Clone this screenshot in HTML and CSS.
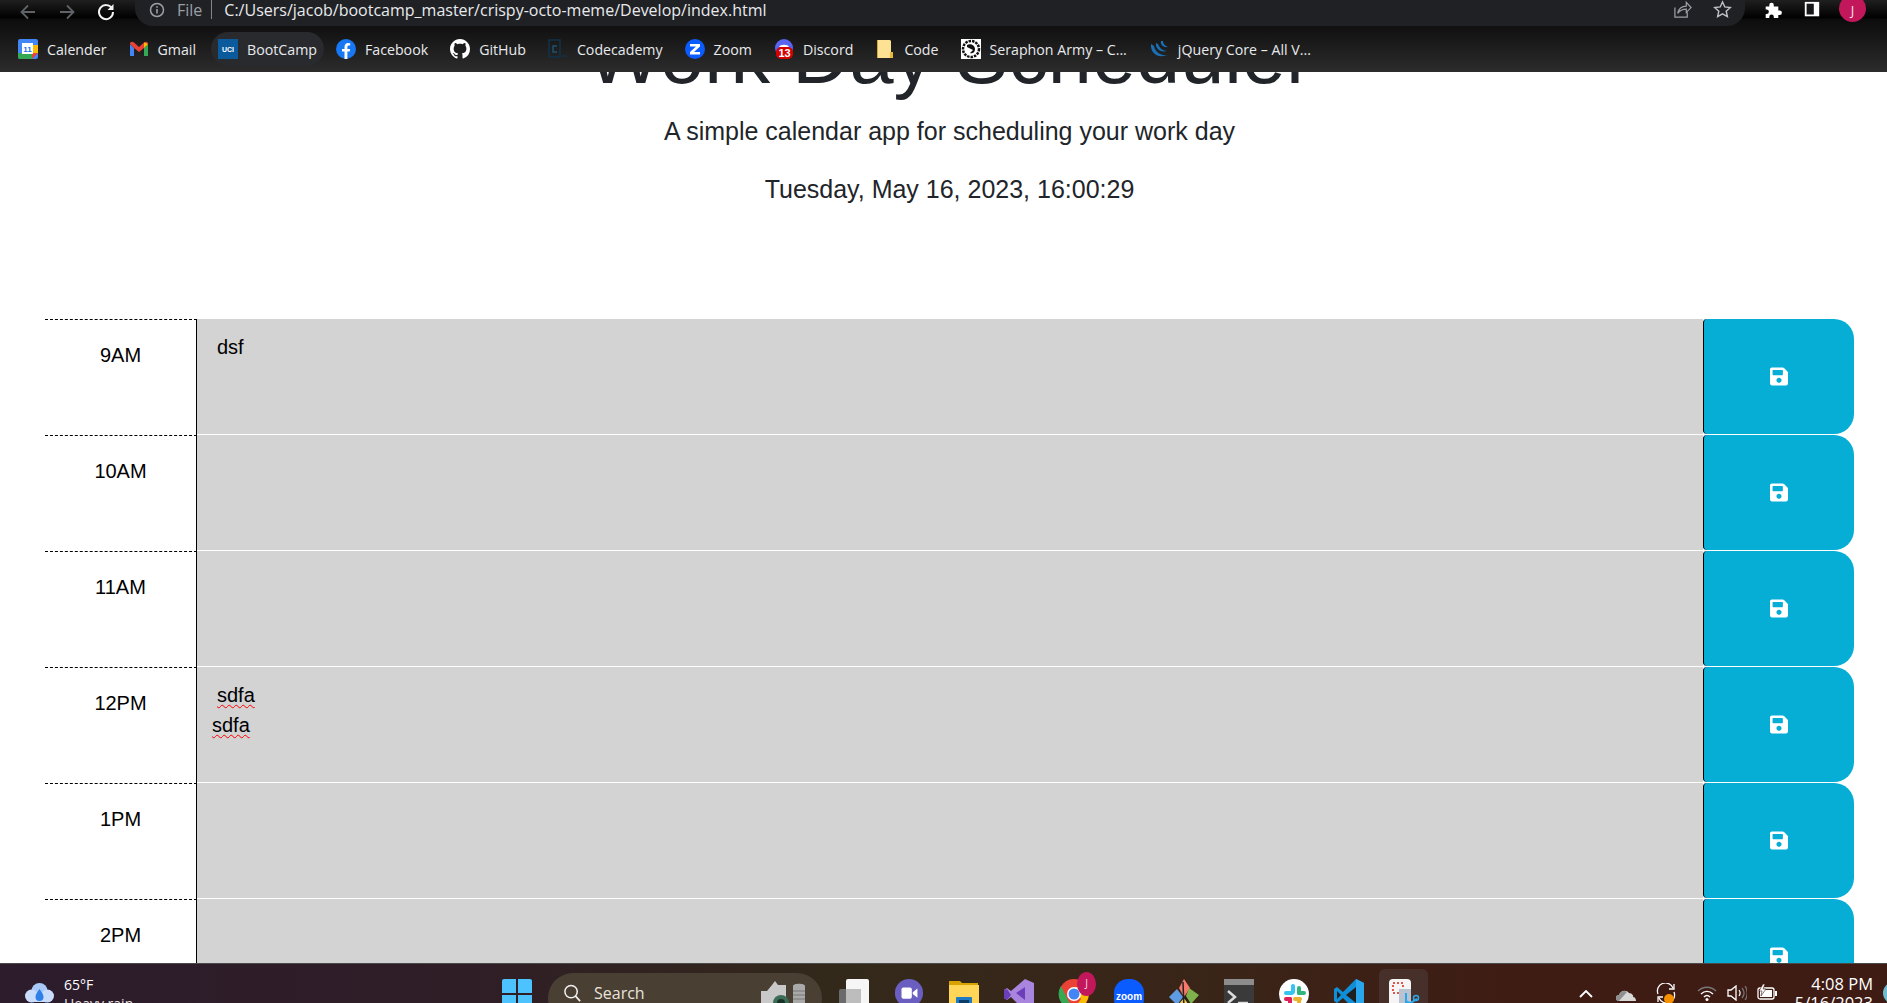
FILE: index.html
```html
<!DOCTYPE html>
<html lang="en">
<head>
<meta charset="utf-8">
<title>Work Day Scheduler</title>
<link rel="stylesheet" href="styles.css">
</head>
<body>
<div class="screen">
  <header class="chrome">
    <div class="toolbar">
      <div class="nav">
        <svg class="nav-icon" viewBox="0 0 20 20"><path d="M17 10H4M10 3.500 3.500 10 10 16.500" fill="none" stroke="#5f6368" stroke-width="1.800"/></svg>
        <svg class="nav-icon" viewBox="0 0 20 20"><path d="M3 10h13M10 3.500 16.500 10 10 16.500" fill="none" stroke="#5f6368" stroke-width="1.800"/></svg>
        <svg class="nav-icon" viewBox="0 0 20 20"><path d="M16 6.500A7 7 0 1 0 17 10" fill="none" stroke="#f1f3f4" stroke-width="2"/><path d="M17.500 2v6h-6z" fill="#f1f3f4"/></svg>
      </div>
      <div class="omnibox">
        <svg class="info" viewBox="0 0 16 16"><circle cx="8" cy="8" r="6.500" fill="none" stroke="#9aa0a6" stroke-width="1.500"/><path d="M8 7v4.500M8 4.300v1.500" stroke="#9aa0a6" stroke-width="1.600"/></svg>
        <span class="scheme">File</span>
        <span class="sep"></span>
        <span class="url">C:/Users/jacob/bootcamp_master/crispy-octo-meme/Develop/index.html</span>
        <svg class="omni-icon share" viewBox="0 0 20 20"><path d="M2 8v10h13v-5M5 14c1-5 4-7.500 9-7.500V2.500l5 5.500-5 5V9.500c-4 0-7 1.500-9 4.500z" fill="none" stroke="#9aa0a6" stroke-width="1.300"/></svg>
        <svg class="omni-icon" viewBox="0 0 20 20"><path d="m10 2 2.400 5.300 5.800.6-4.300 3.900 1.200 5.700L10 14.600l-5.100 2.900 1.200-5.700L1.800 7.900l5.800-.6z" fill="none" stroke="#bdc1c6" stroke-width="1.500"/></svg>
      </div>
      <div class="actions">
        <svg class="action" viewBox="0 0 20 20"><path d="M3 6h4V4.500a2.500 2.500 0 0 1 5 0V6h5v4.500h1.500a2.500 2.500 0 0 1 0 5H17V19h-5v-1.500a2.500 2.500 0 0 0-5 0V19H3v-4.500h1a2.500 2.500 0 0 0 0-5H3z" fill="#fff"/></svg>
        <svg class="action" viewBox="0 0 20 20"><path d="M2 1h16v16H2z" fill="#fff"/><path d="M4 3h8v12H4z" fill="#16171a"/></svg>
        <span class="avatar">J</span>
      </div>
    </div>
    <nav class="bookmarks">
      <a class="bm bm-cal"><svg viewBox="0 0 20 20"><rect width="20" height="20" rx="2" fill="#4285f4"/><path d="M0 14h14v6H2a2 2 0 0 1-2-2z" fill="#34a853"/><path d="M14 14h6v-8h-6z" fill="#fbbc04"/><path d="M14 14h6l-6 6z" fill="#ea4335"/><rect x="4" y="4" width="11" height="11" fill="#fff"/><text x="9.500" y="13" class="cal-num">11</text></svg>Calender</a>
      <a class="bm bm-gmail"><svg viewBox="0 0 20 20"><path d="M1 5v12h4V9z" fill="#4285f4"/><path d="M15 9v8h4V5z" fill="#34a853"/><path d="M1 5l4 4 5 4 5-4 4-4c0-2-2-3-4-1.500L10 8 5 3.500C3 2 1 3 1 5z" fill="#ea4335"/><path d="M15 3.500 19 5v0l-4 4z" fill="#fbbc04"/></svg>Gmail</a>
      <a class="bm bm-uci"><svg viewBox="0 0 20 20"><rect width="20" height="20" fill="#0a5a9c"/><text x="10" y="13" class="uci">UCI</text></svg>BootCamp</a>
      <a class="bm bm-fb"><svg viewBox="0 0 20 20"><circle cx="10" cy="10" r="10" fill="#1877f2"/><path d="M8.500 20v-7.500H6V10h2.500V7.800c0-2.500 1.500-3.800 3.700-3.800l2 .2v2.300h-1.200c-1.200 0-1.600.7-1.600 1.500V10h2.700l-.4 2.500H11.400V20z" fill="#fff"/></svg>Facebook</a>
      <a class="bm bm-gh"><svg viewBox="0 0 16 16"><path fill="#fff" d="M8 0C3.580 0 0 3.580 0 8c0 3.540 2.290 6.530 5.470 7.590.4.070.55-.17.55-.38 0-.19-.01-.82-.01-1.490-2.010.37-2.530-.49-2.690-.94-.09-.23-.48-.94-.82-1.130-.28-.15-.68-.52-.01-.53.63-.01 1.080.58 1.230.82.720 1.210 1.870.87 2.330.66.070-.52.280-.87.510-1.070-1.780-.2-3.640-.89-3.640-3.950 0-.87.310-1.590.820-2.150-.08-.2-.36-1.020.08-2.120 0 0 .67-.21 2.200.82.640-.18 1.320-.27 2-.27s1.360.09 2 .27c1.530-1.040 2.200-.82 2.200-.82.440 1.100.160 1.920.080 2.120.510.560.820 1.270.820 2.150 0 3.070-1.870 3.750-3.650 3.950.290.250.540.730.540 1.480 0 1.070-.01 1.930-.01 2.200 0 .210.150.460.550.380A8.010 8.010 0 0 0 16 8c0-4.420-3.580-8-8-8z"/></svg>GitHub</a>
      <a class="bm bm-cc"><svg viewBox="0 0 20 20"><path d="M1 1h11v17H1zM14 17h5" fill="none" stroke="#10324a" stroke-width="1.500"/><path d="M9 7H5v6h4" fill="none" stroke="#1d5170" stroke-width="1.500"/></svg>Codecademy</a>
      <a class="bm bm-zoom"><svg viewBox="0 0 20 20"><circle cx="10" cy="10" r="10" fill="#0b5cff"/><path d="M5 5h10v2.500L9 13h6v2.500H5V13l6-5.500H5z" fill="#fff"/></svg>Zoom</a>
      <a class="bm bm-disc"><svg viewBox="0 0 20 20"><circle cx="10" cy="9" r="9" fill="#5865f2"/><path d="M5 8c1-3 9-3 10 0z" fill="#fff"/><rect x="2" y="8" width="17" height="12" rx="5" fill="#d50000"/><text x="10.500" y="18" class="disc-num">13</text></svg>Discord</a>
      <a class="bm bm-code"><svg viewBox="0 0 20 20"><path d="M2 1h13l1 1v17H2z" fill="#fde293"/><path d="M15 13h3v6h-3z" fill="#e8b93c"/><path d="M2 1h1v18H2z" fill="#d9a92e"/></svg>Code</a>
      <a class="bm bm-sera"><svg viewBox="0 0 20 20"><rect width="20" height="20" fill="#fff"/><circle cx="10" cy="10" r="8" fill="none" stroke="#111" stroke-width="2.500" stroke-dasharray="2.500 1"/><path d="M6 6c3-2 8 0 8 4s-3 5-5 4l3-3-6-3z" fill="#111"/></svg>Seraphon Army – C...</a>
      <a class="bm bm-jq"><svg viewBox="0 0 20 20"><path d="M2 5c-1 8 6 15 16 11-6 1-12-3-13-9zM7 4c-1 5 4 10 11 8-5 0-8-4-9-7zM12 2c-1 3 2 7 7 6-3-1-5-3-5-6z" fill="#1b6fb5"/></svg>jQuery Core – All V...</a>
    </nav>
  </header>

  <main class="viewport">
    <div class="container">
      <section class="hero">
        <h1 class="title">Work Day Scheduler</h1>
        <p class="lead">A simple calendar app for scheduling your work day</p>
        <p class="lead date">Tuesday, May 16, 2023, 16:00:29</p>
      </section>
      <section class="rows">
        <div class="row">
          <div class="hour">9AM</div>
          <div class="note"><div class="line line-in">dsf</div></div>
          <button class="save"><svg class="disk" viewBox="0 0 448 512"><use href="#save"/></svg></button>
        </div>
        <div class="row">
          <div class="hour">10AM</div>
          <div class="note"></div>
          <button class="save"><svg class="disk" viewBox="0 0 448 512"><use href="#save"/></svg></button>
        </div>
        <div class="row">
          <div class="hour">11AM</div>
          <div class="note"></div>
          <button class="save"><svg class="disk" viewBox="0 0 448 512"><use href="#save"/></svg></button>
        </div>
        <div class="row">
          <div class="hour">12PM</div>
          <div class="note"><div class="line line-in"><span class="typo">sdfa</span></div><div class="line"><span class="typo">sdfa</span></div></div>
          <button class="save"><svg class="disk" viewBox="0 0 448 512"><use href="#save"/></svg></button>
        </div>
        <div class="row">
          <div class="hour">1PM</div>
          <div class="note"></div>
          <button class="save"><svg class="disk" viewBox="0 0 448 512"><use href="#save"/></svg></button>
        </div>
        <div class="row">
          <div class="hour">2PM</div>
          <div class="note"></div>
          <button class="save"><svg class="disk" viewBox="0 0 448 512"><use href="#save"/></svg></button>
        </div>
      </section>
    </div>
  </main>

  <footer class="taskbar">
    <div class="weather">
      <svg class="wx-icon" viewBox="0 0 30 32"><circle cx="15" cy="9" r="8" fill="#a8c8f8"/><circle cx="7" cy="14" r="6.500" fill="#c9dcfb"/><circle cx="23" cy="14" r="6.500" fill="#c9dcfb"/><path d="M5 16h20v4H5z" fill="#c9dcfb"/><path d="M15 7c3 4 4 6 4 8a4 4 0 0 1-8 0c0-2 1-4 4-8zM9 20c2 3 3 5 3 7a3 3 0 0 1-6 0c0-2 1-4 3-7zM21 20c2 3 3 5 3 7a3 3 0 0 1-6 0c0-2 1-4 3-7z" fill="#2f7fe8"/></svg>
      <div class="wx-text"><div>65°F</div><div class="wx-sub">Heavy rain</div></div>
    </div>
    <div class="win-wrap">
      <svg class="tb-icon" viewBox="0 0 30 30"><path d="M0 2a2 2 0 0 1 2-2h12v14H0zM16 0h12a2 2 0 0 1 2 2v12H16zM0 16h14v14H2a2 2 0 0 1-2-2zM16 16h14v12a2 2 0 0 1-2 2H16z" fill="#4cc2ff"/></svg>
    </div>
    <div class="search">
      <svg class="search-icon" viewBox="0 0 20 20"><circle cx="8.500" cy="8.500" r="6.500" fill="none" stroke="#f0f0f0" stroke-width="1.600"/><path d="m13 13 5 5.500" stroke="#f0f0f0" stroke-width="1.800"/></svg>
      <span class="search-label">Search</span>
      <svg class="cam" viewBox="0 0 48 30"><path d="M2 12h6l5-6 3-4 3 4h8v24H2z" fill="#c9c9c9"/><circle cx="22" cy="24" r="8" fill="#3c6b56"/><circle cx="22" cy="24" r="4" fill="#173328"/><path d="M34 7c0-3 12-3 12 0v23H34z" fill="#a9a9a9"/><path d="M34 12h12M34 16h12M34 20h12" stroke="#777"/></svg>
    </div>
    <div class="apps">
      <svg class="tb-icon" viewBox="0 0 30 30"><rect x="0" y="10" width="22" height="24" rx="2" fill="#6b6b6b"/><rect x="7" y="0" width="23" height="26" rx="2" fill="#f6f6f6"/><rect x="7" y="10" width="15" height="16" fill="#bdbdbd"/></svg>
      <svg class="tb-icon" viewBox="0 0 30 32"><circle cx="15" cy="15" r="15" fill="#6a5fc1"/><path d="M6 28h8v4z" fill="#6a5fc1"/><rect x="7" y="9" width="11" height="12" rx="2" fill="#fff"/><path d="M19 14l5-4v10l-5-4z" fill="#fff"/></svg>
      <svg class="tb-icon" viewBox="0 0 30 30"><path d="M0 2h11l2 2h16v6H0z" fill="#d9a200"/><path d="M0 6h30v24H0z" fill="#ffd658"/><rect x="7" y="18" width="16" height="12" rx="1" fill="#1f7ac4"/><rect x="10" y="21" width="10" height="3" fill="#0b3d66"/></svg>
      <svg class="tb-icon" viewBox="0 0 30 30"><path d="M21 0 30 4v24l-9 4L7 18l-4 3-3-2v-8l3-2 4 3z" fill="#a985e0"/><path d="M21 8 12 14l9 7z" fill="#6b3fb8"/><path d="M0 11v8l3 2 4-5-4-6z" fill="#6b3fb8"/></svg>
      <div class="chrome-app">
        <svg class="tb-icon" viewBox="0 0 30 30"><circle cx="15" cy="15" r="15" fill="#ea4335"/><path d="M15 30a15 15 0 0 0 13-22H15l7 12z" fill="#fbbc04"/><path d="M2 7l8 16 5 7A15 15 0 0 1 2 7z" fill="#34a853"/><circle cx="15" cy="15" r="7" fill="#fff"/><circle cx="15" cy="15" r="5.500" fill="#4285f4"/></svg>
        <span class="app-badge">J</span>
      </div>
      <svg class="tb-icon" viewBox="0 0 30 30"><rect width="30" height="34" rx="14" fill="#0b5cff"/><text x="15" y="21" class="zoom-word">zoom</text></svg>
      <svg class="tb-icon" viewBox="0 0 30 30"><path d="M15 0l6 9-6 9-5-9z" fill="#f4786b"/><path d="M20 9l10 7-8 9-5-8z" fill="#7fb24a"/><path d="M8 10l6 8-6 8-8-8z" fill="#5e9de6"/><path d="M15 19l7 7-7 9-6-9z" fill="#f5cc4a"/><path d="M14 3l1 27M14 16l6 9" stroke="#222" stroke-width="1.500"/></svg>
      <svg class="tb-icon" viewBox="0 0 30 30"><rect width="30" height="34" rx="2" fill="#3a3a3a"/><rect width="30" height="6" fill="#8c8c8c"/><path d="M4 12l7 6-7 6" fill="none" stroke="#ddd" stroke-width="2.500"/><path d="M14 24h10" stroke="#ddd" stroke-width="2.500"/></svg>
      <svg class="tb-icon" viewBox="0 0 30 30"><circle cx="15" cy="15" r="15" fill="#fff"/><rect x="12" y="5" width="4" height="10" rx="2" fill="#36c5f0"/><rect x="5" y="12" width="10" height="4" rx="2" fill="#36c5f0"/><rect x="18" y="7" width="4" height="9" rx="2" fill="#2eb67d"/><rect x="18" y="12" width="9" height="4" rx="2" fill="#2eb67d"/><rect x="14" y="18" width="9" height="4" rx="2" fill="#ecb22e"/><rect x="5" y="18" width="8" height="4" rx="2" fill="#e01e5a"/><rect x="9" y="18" width="4" height="9" rx="2" fill="#e01e5a"/><rect x="18" y="18" width="4" height="9" rx="2" fill="#ecb22e"/></svg>
      <svg class="tb-icon" viewBox="0 0 30 30"><path d="M22 0l8 4v24l-8 4L9 19l-6 5-3-2v-12l3-2 6 5z" fill="#0f8fd8"/><path d="M22 8v16l-10-8z" fill="#1f1f1f"/><path d="M22 0l8 4v24l-8 4z" fill="#2aa7ec"/><path d="M3 12l4 4-4 4z" fill="#1f1f1f"/></svg>
      <div class="snip">
        <svg class="tb-icon" viewBox="0 0 30 30"><rect width="22" height="34" rx="4" fill="#f5f5f5"/><path d="M4 4h10v10H4z" fill="none" stroke="#e2574c" stroke-width="2" stroke-dasharray="2 2"/><rect x="10" y="10" width="12" height="24" fill="#b9c4d0"/><path d="M17 14v18M17 22c4 4 7 0 11-2" fill="none" stroke="#2aa7ec" stroke-width="2"/><circle cx="27" cy="19" r="2.500" fill="none" stroke="#2aa7ec" stroke-width="1.500"/></svg>
      </div>
    </div>
    <div class="tray">
      <svg class="chevron" viewBox="0 0 14 8"><path d="M1 7l6-6 6 6" fill="none" stroke="#fff" stroke-width="1.800"/></svg>
      <svg class="cloud" viewBox="0 0 20 12"><path d="M3 12a3 3 0 0 1 0-6c1-4 7-6 10-2 3 0 5 3 4 4 2 0 3 2 3 4z" fill="#d8d8d8"/><path d="M3 12a3 3 0 0 1 0-6c1-4 6-5 8-3" fill="#8f8f8f"/></svg>
      <div class="sync">
        <svg viewBox="0 0 20 20"><path d="M2 11A8 8 0 0 1 17 5M18 9a8 8 0 0 1-15 6" fill="none" stroke="#fff" stroke-width="1.300"/><path d="M18 1v5h-5M2 19v-5h5" fill="none" stroke="#fff" stroke-width="1.300"/></svg>
        <span class="sync-dot"></span>
      </div>
      <svg class="wifi" viewBox="0 0 20 16"><path d="M1 6c5-5 13-5 18 0" fill="none" stroke="#777" stroke-width="1.300"/><path d="M4 9c3.500-3.500 8.500-3.500 12 0M7 12c2-2 4-2 6 0" fill="none" stroke="#fff" stroke-width="1.400"/><circle cx="10" cy="14.500" r="1.500" fill="#fff"/></svg>
      <svg class="vol" viewBox="0 0 20 16"><path d="M1 5h3l5-4v14l-5-4H1z" fill="none" stroke="#fff" stroke-width="1.300"/><path d="M12 5c1.500 2 1.500 4 0 6" fill="none" stroke="#fff" stroke-width="1.200"/><path d="M15 3c2.500 3 2.500 7 0 10M18 1c3 4 3 10 0 14" fill="none" stroke="#777" stroke-width="1.200"/></svg>
      <svg class="batt" viewBox="0 0 20 16"><rect x="1" y="4" width="16" height="11" rx="2" fill="none" stroke="#fff" stroke-width="1.300"/><rect x="3" y="6" width="12" height="7" fill="#fff"/><rect x="18" y="7" width="2" height="5" fill="#fff"/><path d="M6 0 2 7h3l-1 5 5-7H6l2-5z" fill="#fff" stroke="#3c1c14" stroke-width=".6"/></svg>
      <div class="clock"><div>4:08 PM</div><div>5/16/2023</div></div>
      <span class="notif">3</span>
    </div>
  </footer>
</div>

<svg class="defs" width="0" height="0" aria-hidden="true">
  <symbol id="save" viewBox="0 0 448 512"><path fill="#fff" d="M433.941 129.941l-83.882-83.882A48 48 0 0 0 316.118 32H48C21.490 32 0 53.490 0 80v352c0 26.510 21.490 48 48 48h352c26.510 0 48-21.490 48-48V163.882a48 48 0 0 0-14.059-33.941zM224 416c-35.346 0-64-28.654-64-64 0-35.346 28.654-64 64-64s64 28.654 64 64c0 35.346-28.654 64-64 64zm96-304.520V212c0 6.627-5.373 12-12 12H76c-6.627 0-12-5.373-12-12V108c0-6.627 5.373-12 12-12h228.520c3.183 0 6.235 1.264 8.485 3.515l3.480 3.480A11.996 11.996 0 0 1 320 111.480z"/></symbol>
</svg>
</body>
</html>
```

FILE: styles.css
```css
* { box-sizing: border-box; }
html, body { margin: 0; height: 100%; overflow: hidden; }
body { font-family: "Liberation Sans", Arial, sans-serif; color: #212529; background: #fff; }
.defs { display: block; height: 0; }
.screen { display: flex; flex-direction: column; height: 1003px; overflow: hidden; }

/* browser chrome */
.chrome { flex: 0 0 72px; display: flex; flex-direction: column; background: linear-gradient(#101010 26px, #2c2c2c 72px); }
.toolbar { flex: 0 0 26px; display: flex; background: linear-gradient(#1f1f1f 0, #000 18px, #0c0c0c 19px, #111 26px); }
.nav { display: flex; gap: 19px; width: 135px; padding: 2px 0 0 18px; }
.nav-icon { width: 20px; height: 20px; }
.omnibox { flex: 1; min-width: 0; height: 26px; display: flex; align-items: center; background: #202124; border-radius: 0 0 18px 18px; font-family: "Open Sans", sans-serif; font-size: 16px; padding: 0 0 7px 14px; }
.info { width: 16px; height: 16px; margin-right: 12px; }
.scheme { color: #9aa0a6; }
.sep { width: 1px; height: 19px; background: #80868b; margin: 0 12px 0 9px; }
.url { color: #e8eaed; flex: 1; white-space: nowrap; }
.omni-icon { width: 19px; height: 19px; margin-right: 13px; }
.omni-icon.share { margin-right: 21px; }
.actions { width: 142px; display: flex; align-items: flex-start; padding: 1px 0 0 17px; }
.action { width: 20px; height: 18px; margin-right: 20px; }
.avatar { flex: none; width: 27px; height: 27px; margin-top: -6px; margin-left: -3px; border-radius: 50%; background: #c2185b; color: #fce4ec; font: 13px/31px "Open Sans", sans-serif; text-align: center; }

.bookmarks { flex: 1; display: flex; align-items: center; gap: 8px; padding: 0 0 0 11px; }
.bm { display: flex; align-items: center; gap: 9px; height: 34px; padding: 0 7px; border-radius: 17px; color: #e8eaed; font: 14.200px "Open Sans", sans-serif; white-space: nowrap; }
.bm svg { width: 20px; height: 20px; flex: none; }
.bm-uci { background: #292a2d; margin-right: -3px; }
.cal-num { font: bold 8px "Liberation Sans", sans-serif; fill: #1a73e8; text-anchor: middle; }
.uci { font: bold 7px "Liberation Sans", sans-serif; fill: #fff; text-anchor: middle; }
.disc-num { font: bold 11px "Liberation Sans", sans-serif; fill: #fff; text-anchor: middle; }

/* page */
.viewport { flex: 1; min-height: 0; overflow: hidden; }
.container { margin: 0 33px 0 45px; }
.hero { text-align: center; margin-top: -64px; height: 311px; }
.title { margin: 0; font-size: 79.300px; font-weight: 300; line-height: 96px; }
.lead { margin: 0; font-size: 25px; line-height: 36px; }
.hero .lead { margin-top: 9px; }
.hero .date { margin-top: 22px; }

.row { display: flex; height: 116px; }
.hour { flex: 0 0 152px; border-top: 1px dashed #000; border-right: 1px solid #000; font-size: 20px; line-height: 30px; padding-top: 20px; text-align: center; color: #000; }
.note { flex: 1; background: #d3d3d3; border-bottom: 1px solid #fff; padding: 13px 15px 0; font-size: 20px; line-height: 30px; color: #000; }
.line-in { padding-left: 5px; }
.typo { text-decoration: underline wavy #f00; text-decoration-thickness: 1px; text-underline-offset: 2px; }
.save { flex: 0 0 151px; height: 115px; padding: 0; display: flex; align-items: center; justify-content: center; background: #06aed5; border: 0; border-left: 1px solid #000; border-radius: 4px 20px 20px 4px; }
.disk { width: 18px; height: 21px; }

/* taskbar */
.taskbar { flex: 0 0 40px; display: flex; align-items: flex-start; overflow: hidden; border-top: 1px solid #4a4a4a; color: #fff; font-family: "Open Sans", sans-serif; background: linear-gradient(90deg, #2c1c2c 0, #2f1e26 25%, #33291a 45%, #3a2418 65%, #3e1c14 80%, #3e1c14 100%); }
.weather { flex: 0 0 502px; display: flex; padding: 18px 0 0 24px; gap: 8px; }
.wx-icon { width: 31px; height: 32px; }
.wx-text { font-size: 14px; line-height: 19px; margin-top: -7px; margin-left: 1px; }
.wx-sub { color: #e8e0e0; }
.win-wrap { flex: 0 0 46px; padding-top: 15px; }
.tb-icon { display: block; width: 30px; height: 30px; overflow: visible; }
.search { flex: 0 0 274px; min-width: 0; height: 50px; margin-top: 9px; display: flex; align-items: flex-start; padding: 9px 0 0 15px; gap: 12px; border-radius: 25px; background: #4a3f33; font-size: 16px; line-height: 22px; color: #e8e4de; }
.search-icon { width: 19px; height: 20px; margin-top: 1px; }
.cam { flex: none; width: 48px; height: 30px; margin-left: 102px; margin-top: -3px; }
.apps { flex: 0 0 600px; display: flex; gap: 25px; padding: 15px 0 0 17px; }
.chrome-app { position: relative; }
.app-badge { position: absolute; top: -7px; right: -7px; width: 19px; height: 24px; border-radius: 50%; background: #c2185b; color: #f8d7e3; font-size: 10px; line-height: 22px; text-align: center; }
.zoom-word { font: bold 10px "Liberation Sans", sans-serif; fill: #fff; text-anchor: middle; }
.snip { margin: -10px 0 0 -10px; padding: 10px 9px 0 10px; width: 49px; height: 50px; border-radius: 6px; background: #47302a; }
.tray { flex: 1; min-width: 0; display: flex; align-items: flex-start; padding-top: 21px; }
.chevron { flex: none; width: 14px; height: 8px; margin: 5px 0 0 151px; }
.cloud { flex: none; width: 20px; height: 12px; margin: 4px 0 0 23px; }
.sync { flex: none; position: relative; width: 20px; height: 20px; margin: -2px 0 0 20px; }
.sync svg { width: 20px; height: 20px; display: block; }
.sync-dot { position: absolute; left: 8px; top: 11px; width: 10px; height: 10px; border-radius: 50%; background: #f59000; }
.wifi { flex: none; width: 20px; height: 16px; margin: 0 0 0 21px; }
.vol { flex: none; width: 20px; height: 16px; margin: 0 0 0 10px; }
.batt { flex: none; width: 20px; height: 16px; margin: -1px 0 0 10px; }
.clock { flex: none; width: 96px; margin-top: -11px; text-align: right; font-size: 16.500px; line-height: 19px; }
.notif { flex: none; width: 22px; height: 22px; margin: -3px 0 0 10px; border-radius: 50%; background: #6fbcd2; color: #2c1c14; font-size: 12px; line-height: 22px; padding-left: 5px; }
```
